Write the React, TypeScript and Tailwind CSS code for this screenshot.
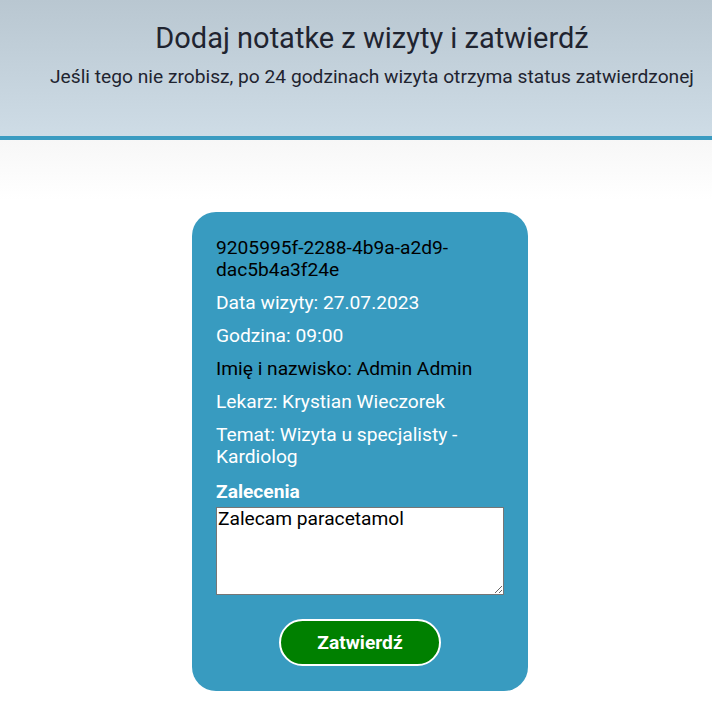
export default function App() {
  return (
    <div className="min-h-[712px] bg-white font-['Roboto',sans-serif]">
      <header className="h-[140px] border-b-4 border-[#3a9bc1] bg-gradient-to-b from-[#b9c7d1] to-[#cedce6] pl-8 pt-[20px] text-center text-[#1f2430]">
        <h1 className="text-[29px] font-normal leading-[36px]">Dodaj notatke z wizyty i zatwierdź</h1>
        <p className="mt-[9px] text-[19.2px] leading-[24px]">
          Jeśli tego nie zrobisz, po 24 godzinach wizyta otrzyma status zatwierdzonej
        </p>
      </header>
      <main className="bg-gradient-to-b from-[#f7f7f7] to-white to-[60px] pb-6 pl-2 pt-[72px]">
        <div className="mx-auto w-[336px] rounded-[24px] bg-[#389bc0] px-6 pb-[25px] pt-[25px] text-[19.2px] leading-[22px] text-white">
          <p className="text-black">9205995f-2288-4b9a-a2d9-dac5b4a3f24e</p>
          <p className="mt-[11px]">Data wizyty: 27.07.2023</p>
          <p className="mt-[11px]">Godzina: 09:00</p>
          <p className="mt-[11px] text-black">Imię i nazwisko: Admin Admin</p>
          <p className="mt-[11px]">Lekarz: Krystian Wieczorek</p>
          <p className="mt-[11px]">Temat: Wizyta u specjalisty - Kardiolog</p>
          <label className="mt-[13px] block font-bold">Zalecenia</label>
          <textarea
            className="mt-[4px] block h-[88px] w-full border border-[#767676] bg-white px-[1px] text-[19.2px] leading-[22px] text-black"
            defaultValue="Zalecam paracetamol"
          />
          <div className="mt-6 flex justify-center">
            <button className="h-[47px] w-[162px] rounded-full border-2 border-white bg-[#008000] text-[19.2px] font-bold text-white">
              Zatwierdź
            </button>
          </div>
        </div>
      </main>
    </div>
  );
}
